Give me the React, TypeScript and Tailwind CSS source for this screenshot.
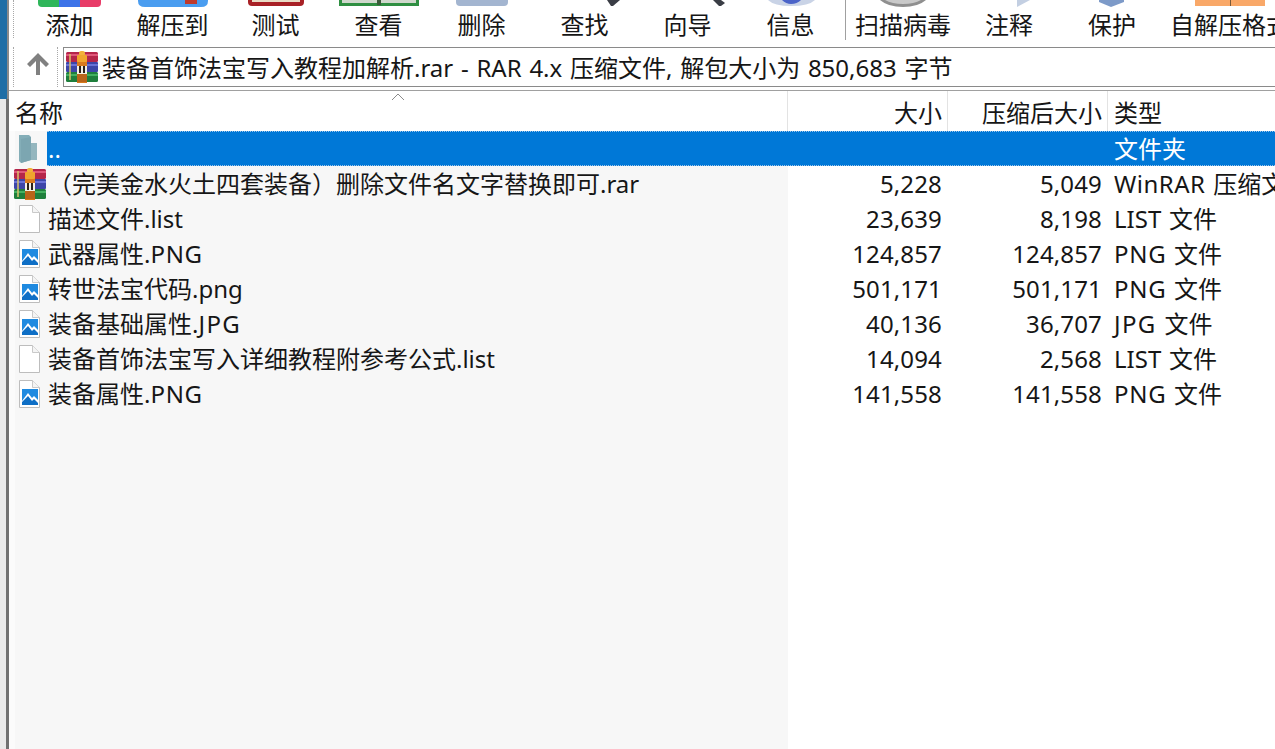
import React from "react";

function RarIcon({ className }: { className: string }) {
  return (
    <svg viewBox="0 0 32 32" className={className}>
      <rect x="0" y="1" width="32" height="10" rx="1.5" fill="#b5264a" />
      <rect x="0" y="3" width="32" height="2" fill="#e0577a" />
      <rect x="0" y="11" width="32" height="10" rx="1" fill="#3d46a8" />
      <rect x="0" y="13" width="32" height="2" fill="#6a72d6" />
      <rect x="0" y="21" width="32" height="10" rx="1.5" fill="#1f7f3c" />
      <rect x="0" y="23" width="32" height="2" fill="#43b060" />
      <rect x="3" y="3" width="2" height="26" fill="#d9c26a" opacity="0.75" />
      <rect x="11" y="6" width="10" height="26" fill="#d97a1e" />
      <rect x="13" y="0" width="6" height="5" rx="2" fill="#f2b23a" />
      <rect x="11" y="4" width="10" height="7" rx="1" fill="#f0a52e" />
      <rect x="11" y="15" width="10" height="8" fill="#f4f1e6" />
      <rect x="13" y="15" width="2" height="7" fill="#2b2118" />
      <rect x="17" y="15" width="2" height="7" fill="#2b2118" />
      <rect x="11" y="23" width="10" height="8" fill="#b9641a" />
    </svg>
  );
}

function FileIcon({ picture }: { picture?: boolean }) {
  return (
    <svg viewBox="0 0 24 30" className="ml-[8px] h-[30px] w-[24px]">
      <path d="M2.5 1.5H15.5L22.5 8.5V28.5H2.5Z" fill="#ffffff" stroke="#bdbdbd" />
      <path d="M15.5 1.5V8.5H22.5" fill="#f4f4f4" stroke="#c9c9c9" />
      {picture && (
        <g>
          <rect x="5" y="10" width="16" height="16" fill="#1f8ae0" />
          <path d="M5 22L11 14L15 19L17 17L21 21V24H5Z" fill="#ffffff" />
          <path d="M5 26V23L11 17L15 22L17 20L21 24V26Z" fill="#0f6fc6" />
        </g>
      )}
    </svg>
  );
}

function FolderUpIcon() {
  return (
    <svg viewBox="0 0 20 30" className="ml-[9px] h-[30px] w-[20px]">
      <path d="M1 1H11L13 3V26L3 29L1 27Z" fill="#84aeb8" />
      <path d="M13 9H19V26H7L13 23Z" fill="#94b6be" />
      <path d="M3 29V5L13 3V26Z" fill="#7ca6b1" />
    </svg>
  );
}

const stubs: Record<string, React.ReactNode> = {
  add: (
    <>
      <path d="M20 0H41V7H24Q20 7 20 3Z" fill="#2fb65a" />
      <rect x="41" y="0" width="21" height="7" fill="#3d73e8" />
      <path d="M62 0H83V3Q83 7 79 7H62Z" fill="#e83c68" />
    </>
  ),
  extract: (
    <>
      <path d="M17 0H87V1Q87 7 80 7H24Q17 7 17 1Z" fill="#4a9df0" />
      <rect x="64" y="0" width="12" height="4" fill="#c0392b" />
    </>
  ),
  test: (
    <>
      <path d="M24 0H80V2Q80 6 76 6H28Q24 6 24 2Z" fill="#a82126" />
      <rect x="28" y="0" width="48" height="2" fill="#e9dcc6" />
    </>
  ),
  view: (
    <>
      <rect x="12" y="0" width="80" height="6" fill="#2f8f42" />
      <rect x="15" y="0" width="74" height="3" fill="#cfd8cc" />
      <rect x="50" y="0" width="4" height="5" fill="#3a5a3a" />
    </>
  ),
  del: <path d="M26 0H78V2Q78 6 74 6H30Q26 6 26 2Z" fill="#a3b5d0" />,
  find: <path d="M74 0H87L80 6H78Z" fill="#3a3d45" />,
  wizard: <path d="M77 0H85L89 3L85 6H83Z" fill="#3a3d45" />,
  info: (
    <>
      <path d="M29 0H76Q70 6 52 6Q35 6 29 0Z" fill="#c9d3e6" />
      <path d="M43 0H62Q58 4 52 4Q47 4 43 0Z" fill="#4a63c8" />
    </>
  ),
  scan: (
    <>
      <path d="M28 0H74Q66 7 51 7Q36 7 28 0Z" fill="#8f8f8f" />
      <path d="M33 0H69Q62 4 51 4Q40 4 33 0Z" fill="#c9c9c9" />
    </>
  ),
  note: <path d="M59 0H72L59 7Z" fill="#c3cfe2" />,
  protect: <path d="M38 0H63V2L50 7L38 2Z" fill="#7d9ac8" />,
  sfx: (
    <>
      <rect x="16" y="0" width="70" height="6" fill="#f9a868" />
      <rect x="51" y="0" width="1" height="6" fill="#7a5a3a" />
    </>
  ),
};

const tools = [
  { label: "添加", w: "w-[103px]", s: "add" },
  { label: "解压到", w: "w-[103px]", s: "extract" },
  { label: "测试", w: "w-[103px]", s: "test" },
  { label: "查看", w: "w-[103px]", s: "view" },
  { label: "删除", w: "w-[103px]", s: "del" },
  { label: "查找", w: "w-[103px]", s: "find" },
  { label: "向导", w: "w-[103px]", s: "wizard" },
  { label: "信息", w: "w-[103px]", s: "info" },
];

const tools2 = [
  { label: "扫描病毒", w: "w-[114px]", s: "scan" },
  { label: "注释", w: "w-[98px]", s: "note" },
  { label: "保护", w: "w-[108px]", s: "protect" },
  { label: "自解压格式", w: "w-[128px]", s: "sfx" },
];

function Tool({ t }: { t: { label: string; w: string; s: string } }) {
  return (
    <div className={`${t.w} flex shrink-0 flex-col items-center`}>
      <svg viewBox="0 0 103 8" className="h-[8px] w-[103px] shrink-0 overflow-visible">
        {stubs[t.s]}
      </svg>
      <span className="whitespace-nowrap text-[24px] leading-[33px]">{t.label}</span>
    </div>
  );
}

const rows = [
  { pre: "（完美金水火土四套装备）删除文件名文字替换即可.rar", ext: "", track: "", size: "5,228", packed: "5,049", tpre: "WinRAR", tt: "tracking-[0.5px]", type: " 压缩文件", icon: "rar" },
  { pre: "描述文件.list", ext: "", track: "", size: "23,639", packed: "8,198", tpre: "LIST", tt: "", type: " 文件", icon: "file" },
  { pre: "武器属性.", ext: "PNG", track: "tracking-[0.7px]", size: "124,857", packed: "124,857", tpre: "PNG", tt: "tracking-[0.7px]", type: " 文件", icon: "pic" },
  { pre: "转世法宝代码.png", ext: "", track: "", size: "501,171", packed: "501,171", tpre: "PNG", tt: "tracking-[0.7px]", type: " 文件", icon: "pic" },
  { pre: "装备基础属性.", ext: "JPG", track: "tracking-[1.4px]", size: "40,136", packed: "36,707", tpre: "JPG", tt: "tracking-[1.4px]", type: " 文件", icon: "pic" },
  { pre: "装备首饰法宝写入详细教程附参考公式.list", ext: "", track: "", size: "14,094", packed: "2,568", tpre: "LIST", tt: "", type: " 文件", icon: "file" },
  { pre: "装备属性.", ext: "PNG", track: "tracking-[0.7px]", size: "141,558", packed: "141,558", tpre: "PNG", tt: "tracking-[0.7px]", type: " 文件", icon: "pic" },
];

export default function App() {
  return (
    <div className="flex h-[749px] w-[1275px] overflow-hidden bg-white font-['Noto_Sans','Noto_Sans_CJK_SC',sans-serif] text-[24px] text-[#161616]">
      <div className="flex w-[9px] shrink-0 flex-col">
        <div className="flex h-[99px] shrink-0">
          <div className="w-[7px] bg-[#1f6ea6]" />
          <div className="w-[2px] bg-[#8a8a8a]" />
        </div>
        <div className="flex flex-1">
          <div className="w-[6px] bg-[#e9e9e9]" />
          <div className="w-[3px] bg-[#707070]" />
        </div>
      </div>

      <div className="flex min-w-0 flex-1 flex-col">
        <div className="flex h-[42px] shrink-0 pl-[4px]">
          <div className="mr-[4px] h-[38px] w-px shrink-0 border-l border-dotted border-[#a8a8a8]" />
          {tools.map((t) => (
            <Tool key={t.label} t={t} />
          ))}
          <div className="ml-[3px] h-[40px] w-px shrink-0 bg-[#a0a0a0]" />
          {tools2.map((t) => (
            <Tool key={t.label} t={t} />
          ))}
        </div>

        <div className="mt-[5px] flex h-[40px] shrink-0 items-center pl-[4px]">
          <div className="h-[40px] w-px shrink-0 border-l border-dotted border-[#a8a8a8]" />
          <svg viewBox="0 0 24 24" className="mb-[6px] ml-[12px] h-[24px] w-[24px] shrink-0">
            <path d="M12 1L23 12L20 15L14 9V23H10V9L4 15L1 12Z" fill="#808080" />
          </svg>
          <div className="ml-[7px] h-[40px] w-px shrink-0 border-l border-dotted border-[#a8a8a8]" />
          <div className="ml-[5px] flex h-[40px] w-[1230px] shrink-0 items-center border border-[#8a8a8a] pl-[2px]">
            <RarIcon className="h-[32px] w-[32px] shrink-0" />
            <span className="ml-[4px] mt-[2px] whitespace-nowrap leading-[34px] [word-spacing:1.5px]">
              装备首饰法宝写入教程加解析.rar - RAR 4.x 压缩文件, 解包大小为 850,683 字节
            </span>
          </div>
        </div>

        <div className="mt-[3px] h-px shrink-0 bg-[#a0a0a0]" />

        <div className="flex h-[40px] shrink-0 items-center">
          <div className="flex h-full w-[779px] shrink-0 items-center justify-between border-r border-[#e3e3e3] pl-[6px]">
            <span className="mt-[3px]">名称</span>
            <svg viewBox="0 0 14 8" className="mr-[382px] mb-[28px] h-[8px] w-[14px]">
              <path d="M1 7L7 1L13 7" fill="none" stroke="#8a8a8a" />
            </svg>
          </div>
          <div className="flex h-full w-[160px] shrink-0 items-center justify-end border-r border-[#e3e3e3] pr-[5px]">
            <span className="mt-[3px]">大小</span>
          </div>
          <div className="flex h-full w-[160px] shrink-0 items-center justify-end border-r border-[#e3e3e3] pr-[5px]">
            <span className="mt-[3px]">压缩后大小</span>
          </div>
          <div className="mt-[3px] whitespace-nowrap pl-[6px]">类型</div>
        </div>

        <div className="min-h-0 flex-1 bg-[linear-gradient(to_right,#fbfbfb_6px,#f7f7f7_6px,#f7f7f7_779px,#ffffff_779px)]">
          <div className="flex h-[35px] items-center">
            <div className="flex w-[38px] shrink-0 items-center">
              <FolderUpIcon />
            </div>
            <div className="flex h-[35px] min-w-0 flex-1 items-center border-y border-dotted border-[#9cc4ea] bg-[#0078d7] pl-px text-white">
              <div className="w-[740px] shrink-0">..</div>
              <div className="w-[320px] shrink-0" />
              <div className="mt-[1px] whitespace-nowrap pl-[6px]">文件夹</div>
            </div>
          </div>
          {rows.map((r) => (
            <div key={r.pre} className="flex h-[35px] items-center">
              <div className="flex w-[38px] shrink-0 items-center">
                {r.icon === "rar" ? (
                  <RarIcon className="ml-[5px] h-[32px] w-[32px]" />
                ) : (
                  <FileIcon picture={r.icon === "pic"} />
                )}
              </div>
              <div className="w-[741px] shrink-0 whitespace-nowrap pl-px">
                {r.pre}
                {r.ext && <span className={r.track}>{r.ext}</span>}
              </div>
              <div className="w-[160px] shrink-0 pr-[6px] text-right tracking-[0.15px]">{r.size}</div>
              <div className="w-[160px] shrink-0 pr-[6px] text-right tracking-[0.15px]">{r.packed}</div>
              <div className="whitespace-nowrap pl-[6px] [word-spacing:1.5px]">
                <span className={r.tt}>{r.tpre}</span>
                {r.type}
              </div>
            </div>
          ))}
        </div>
      </div>
    </div>
  );
}
